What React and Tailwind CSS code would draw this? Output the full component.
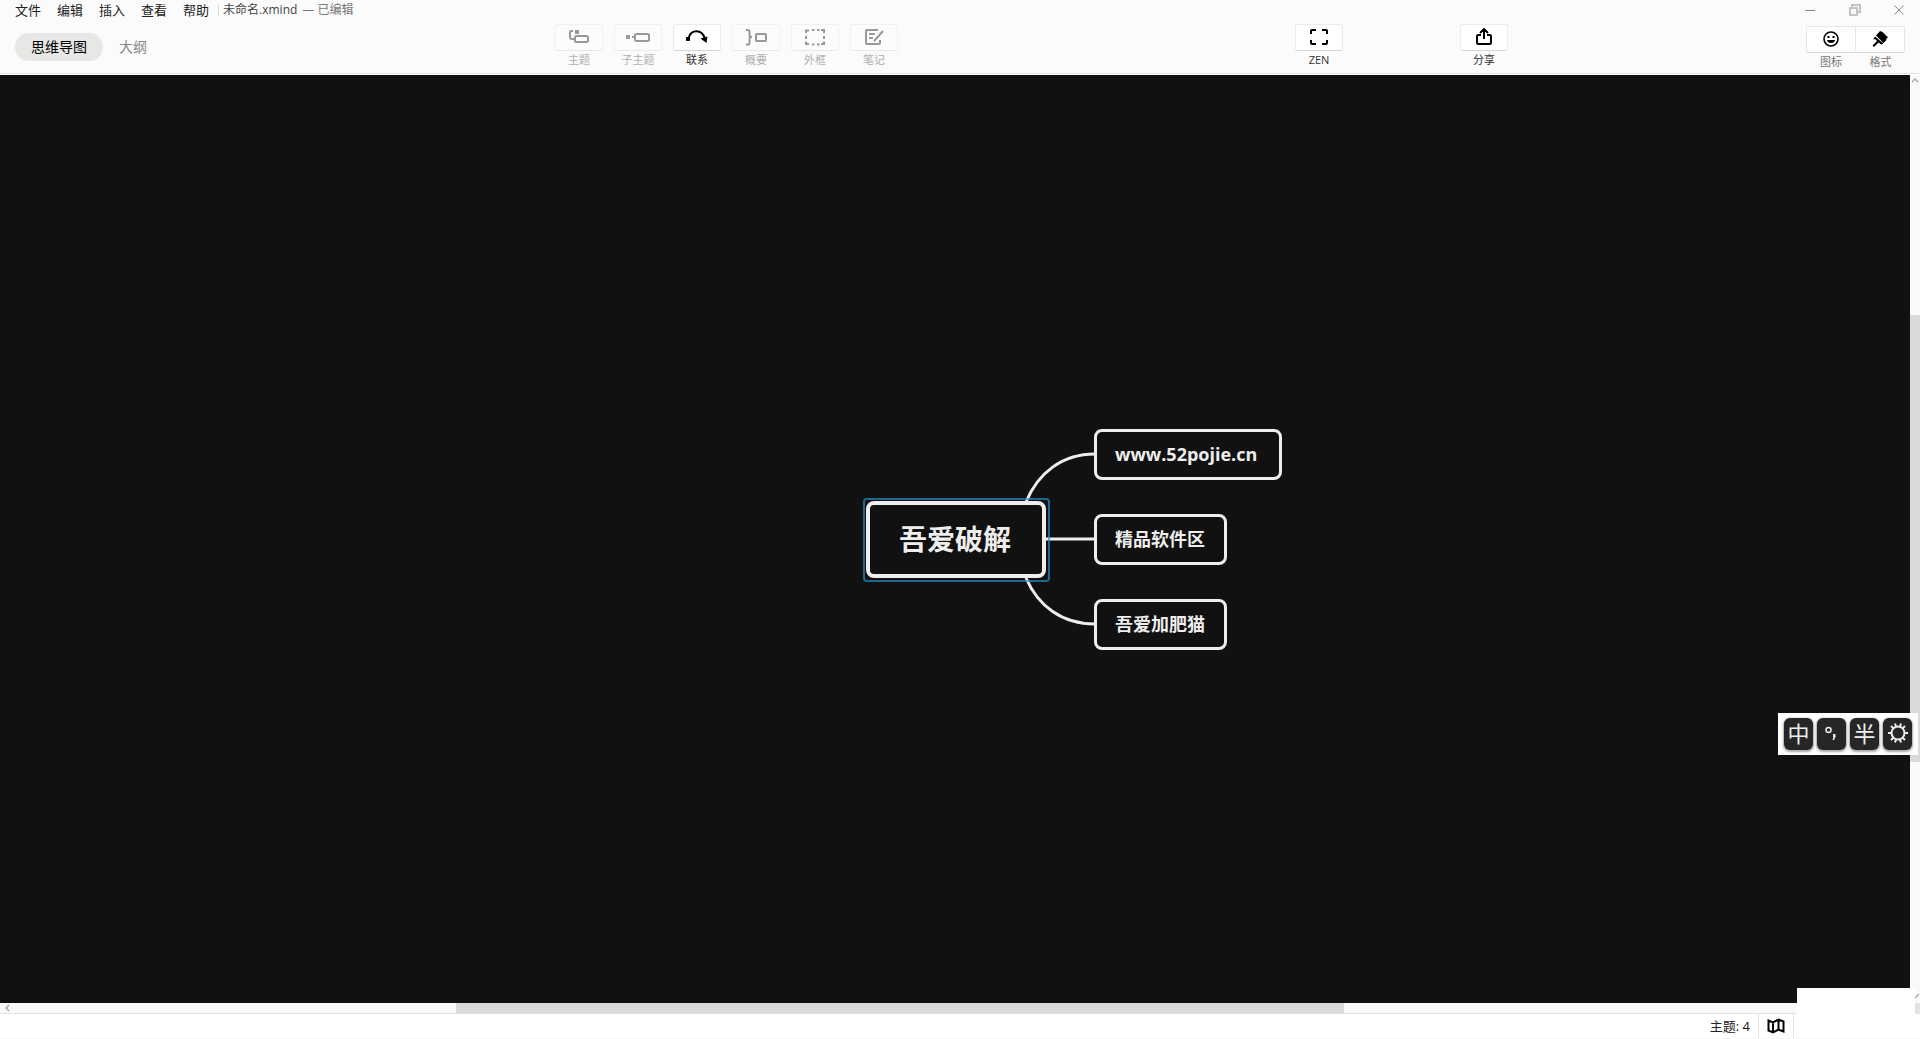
import clsx from "clsx";

const menus = ["文件", "编辑", "插入", "查看", "帮助"];

const icons = {
  topic: (
    <svg width="22" height="18" viewBox="0 0 22 18" fill="none" stroke="currentColor" strokeWidth="2">
      <path d="M5 3H3a1 1 0 0 0-1 1v5a2 2 0 0 0 2 2h3" />
      <rect x="7" y="8" width="13" height="6" rx="1.5" />
      <path d="M7 2h4v4H7z" fill="currentColor" stroke="none" />
    </svg>
  ),
  subtopic: (
    <svg width="24" height="18" viewBox="0 0 24 18" fill="none" stroke="currentColor" strokeWidth="2">
      <path d="M0 7h4v4H0z" fill="currentColor" stroke="none" />
      <path d="M6 9h3" />
      <rect x="9" y="6" width="14" height="7" rx="1.5" />
    </svg>
  ),
  relation: (
    <svg width="22" height="18" viewBox="0 0 22 18" fill="none" stroke="currentColor" strokeWidth="2">
      <path d="M3 9C5 1.500 16 .5 18.500 10" />
      <path d="M0 9h4v4H0zM14.500 10.500l7-2-1 6.500z" fill="currentColor" stroke="none" />
    </svg>
  ),
  summary: (
    <svg width="22" height="18" viewBox="0 0 22 18" fill="none" stroke="currentColor" strokeWidth="2">
      <path d="M1 2h2q1.500 0 1.500 1.500V7q0 2 2.500 2-2.500 0-2.500 2v4q0 1.500-1.500 1.500H1" />
      <rect x="11" y="6" width="10" height="7" rx="1" />
    </svg>
  ),
  boundary: (
    <svg width="20" height="18" viewBox="0 0 20 18" fill="none" stroke="currentColor" strokeWidth="2">
      <path d="M1 5V2.500h3M7 2h2.500M12 2h2.500M16 2h3v3M1 8v3M19 8v3M1 13.500V16h3M7 16.500h2.500M12 16.500h2.500M16 16h3v-2.500" />
    </svg>
  ),
  note: (
    <svg width="20" height="18" viewBox="0 0 20 18" fill="none" stroke="currentColor" strokeWidth="2">
      <path d="M14 2H3a1 1 0 0 0-1 1v12a1 1 0 0 0 1 1h12a1 1 0 0 0 1-1v-3M5 6h6M5 10h4M19 3l-8 9-1 1" />
    </svg>
  ),
  zen: (
    <svg width="18" height="18" viewBox="0 0 18 18" fill="none" stroke="currentColor" strokeWidth="2">
      <path d="M1 6V3a1 1 0 0 1 1-1h4M12 2h4a1 1 0 0 1 1 1v3M17 12v3a1 1 0 0 1-1 1h-4M6 16H2a1 1 0 0 1-1-1v-3" />
    </svg>
  ),
  share: (
    <svg width="18" height="18" viewBox="0 0 18 18" fill="none" stroke="currentColor" strokeWidth="2">
      <path d="M6 7H3a1 1 0 0 0-1 1v7a1 1 0 0 0 1 1h12a1 1 0 0 0 1-1V8a1 1 0 0 0-1-1h-3M9 11V2M5 5l4-4 4 4" />
    </svg>
  ),
  sticker: (
    <svg width="16" height="16" viewBox="0 0 16 16" fill="none" stroke="currentColor" strokeWidth="1.6">
      <circle cx="8" cy="8" r="7" />
      <path d="M4.500 5h2v2h-2zM9.500 5h2v2h-2zM4 9h8c-.3 4-7.700 4-8 0z" fill="currentColor" stroke="none" />
    </svg>
  ),
  format: (
    <svg width="16" height="16" viewBox="0 0 16 16" fill="currentColor">
      <path d="M8 0l2.500 1L16 6.500 14 8l.5 1-3 3L4 4.500z" />
      <path d="M3 5.500l8.500 7-2 1-3-2L2 16l-1.500-1.500L5 10 3 8 1 8.500z" />
    </svg>
  ),
};

const tools = [
  { icon: "topic", label: "主题" },
  { icon: "subtopic", label: "子主题" },
  { icon: "relation", label: "联系", active: true },
  { icon: "summary", label: "概要" },
  { icon: "boundary", label: "外框" },
  { icon: "note", label: "笔记" },
];

function ToolButton({ icon, label, active = true }) {
  return (
    <button disabled={!active} className="flex w-12 flex-col items-center">
      <span
        className={clsx(
          "flex h-[27px] w-12 items-center justify-center rounded-xs border pb-px",
          active
            ? "border-[#ececec] border-b-[#d6d6d6] bg-white text-black"
            : "border-[#f1f1f1] border-b-[#e9e9e9] bg-[#fcfcfc] text-[#999]"
        )}
      >
        {icons[icon]}
      </span>
      <span className={clsx("text-[11px] leading-[18px]", active ? "text-[#333]" : "text-[#b0b0b0]")}>{label}</span>
    </button>
  );
}

function Header() {
  return (
    <header className="h-[74px] shrink-0 border-b border-[#e2e2e2] bg-[#fbfbfb]">
      {/* Title bar */}
      <div className="flex h-5 items-center justify-between pl-[15px] pr-4">
        <div className="flex items-center">
          <nav className="flex gap-4">
            {menus.map((menu) => (
              <button key={menu} className="text-[13px] leading-[18px] text-[#222]">
                {menu}
              </button>
            ))}
          </nav>
          <div className="ml-[9px] h-3 w-px bg-[#ddd]" />
          <span className="ml-1 text-xs text-[#444]">未命名.xmind</span>
          <span className="ml-[5px] text-xs text-[#777]">— 已编辑</span>
        </div>
        <div className="flex items-center gap-[33px] text-[#888]">
          <button aria-label="最小化">
            <svg width="11" height="12" viewBox="0 0 11 12" stroke="currentColor">
              <path d="M0 6.500h10" />
            </svg>
          </button>
          <button aria-label="还原" className="text-[#c4c4c4]">
            <svg width="12" height="12" viewBox="0 0 12 12" fill="none" stroke="currentColor" strokeWidth="2">
              <path d="M3 3V1h8v7H9M1 4h7v7H1z" />
            </svg>
          </button>
          <button aria-label="关闭">
            <svg width="10" height="10" viewBox="0 0 10 10" stroke="currentColor">
              <path d="M.5.5l9 9M9.500.5l-9 9" />
            </svg>
          </button>
        </div>
      </div>

      {/* Toolbar */}
      <div className="grid grid-cols-[555fr_740fr_165fr_346fr_114fr] pt-1">
        <div className="flex items-start gap-4 pl-[15px] pt-[9px] text-sm">
          <button className="h-7 rounded-full bg-[#e7e7e6] px-4 text-black">思维导图</button>
          <button className="h-7 text-[#888]">大纲</button>
        </div>
        <div className="flex gap-[11px]">
          {tools.map((tool) => (
            <ToolButton key={tool.icon} icon={tool.icon} label={tool.label} active={!!tool.active} />
          ))}
        </div>
        <div>
          <ToolButton icon="zen" label="ZEN" />
        </div>
        <div>
          <ToolButton icon="share" label="分享" />
        </div>
        <div className="flex pt-[2px] text-[11px] leading-[18px] text-[#777]">
          <button className="flex flex-col items-center">
            <span className="flex h-[27px] w-[50px] items-center justify-center rounded-l-xs border border-[#e6e6e6] border-b-[#d6d6d6] bg-white pb-px text-black">
              {icons.sticker}
            </span>
            图标
          </button>
          <button className="flex flex-col items-center">
            <span className="flex h-[27px] w-[49px] items-center justify-center rounded-r-xs border border-l-0 border-[#e6e6e6] border-b-[#d6d6d6] bg-white pb-px text-black">
              {icons.format}
            </span>
            格式
          </button>
        </div>
      </div>
    </header>
  );
}

const branches = [
  { text: "www.52pojie.cn", place: "left-[466px] top-px w-[188px]" },
  { text: "精品软件区", place: "left-[466px] top-[86px] w-[133px]" },
  { text: "吾爱加肥猫", place: "left-[466px] top-[171px] w-[133px]" },
];

function MindMap() {
  return (
    <main className="flex min-w-0 flex-1 items-center justify-center overflow-hidden bg-[#111]">
      <div className="relative h-[222px] w-[654px] font-bold text-[#eee]">
        <svg className="absolute inset-0" width="654" height="222" fill="none" stroke="#eee" strokeWidth="3">
          <path d="M398 74C410 45 434 26 467 26M416 111h51M398 150c12 28 36 46 69 46" />
        </svg>
        <div className="absolute left-[238px] top-[73px] flex h-[77px] w-[180px] items-center rounded-lg border-4 border-[#eee] bg-[#111] pb-px pl-[29px] text-[28px] leading-none">
          吾爱破解
        </div>
        <div className="absolute left-[235px] top-[70px] h-[84px] w-[187px] rounded-sm border-2 border-[#2a8cc7]/70" />
        {branches.map((branch) => (
          <div
            key={branch.text}
            className={clsx(
              "absolute flex h-[51px] items-center rounded-lg border-3 border-[#eee] bg-[#111] pb-[2px] pl-[18px] text-lg leading-none",
              branch.place
            )}
          >
            {branch.text}
          </div>
        ))}
      </div>
    </main>
  );
}

function InputMethodBar() {
  const key =
    "flex h-8 w-[29px] items-center justify-center rounded-md bg-[#262626] pb-[2px] text-[22px] leading-none text-[#eee] shadow-[0_1px_2px_1px_#aaa]";
  return (
    <div className="absolute right-[2px] top-[713px] flex h-[42px] w-[140px] items-center justify-center gap-1 bg-white">
      <button className={key}>中</button>
      <button aria-label="标点" className={key}>
        <svg width="16" height="20" viewBox="0 0 16 20" fill="none" stroke="currentColor" strokeWidth="1.5">
          <circle cx="4.5" cy="7" r="2.5" />
          <path d="M9 11h2.500v3L10 17H8.500l1-3H9z" fill="currentColor" stroke="none" />
        </svg>
      </button>
      <button className={key}>半</button>
      <button aria-label="设置" className={key}>
        <svg width="22" height="22" viewBox="0 0 22 22" fill="none" stroke="currentColor" strokeWidth="2">
          <circle cx="11" cy="11" r="6.5" />
          <path
            d="M17.500 11H21M4.500 11H1M15.600 15.600L18 18M6.400 15.600L4 18M15.600 6.400L18 4M6.400 6.400L4 4M9 4.500L8 1.500M13 4.500l1-3M9 17.500l-1 3M13 17.500l1 3"
            strokeWidth="2"
          />
        </svg>
      </button>
    </div>
  );
}

export default function App() {
  return (
    <div className="relative flex h-screen flex-col overflow-hidden bg-white font-['Open_Sans','Noto_Sans_CJK_SC',sans-serif]">
      <Header />

      <div className="mt-px flex min-h-0 flex-1">
        <MindMap />
        {/* Vertical scrollbar */}
        <div className="flex w-[10px] flex-col bg-[#fafafa]">
          <svg width="10" height="10" viewBox="0 0 10 10" fill="none" stroke="#aaa" strokeWidth="1.5">
            <path d="M2 7l3-3 3 3" />
          </svg>
          <div className="flex-[230]" />
          <div className="flex-[447] bg-[#dadada]" />
          <div className="flex-[241]" />
        </div>
      </div>

      {/* Horizontal scrollbar */}
      <div className="flex h-[10px] shrink-0 bg-[#fafafa]">
        <svg width="14" height="10" viewBox="0 0 14 10" fill="none" stroke="#aaa" strokeWidth="1.5">
          <path d="M9 2L6 5l3 3" />
        </svg>
        <div className="flex-[442]" />
        <div className="flex-[888] bg-[#dadada]" />
        <div className="flex-[576]" />
      </div>

      <footer className="flex h-[26px] shrink-0 items-stretch justify-end border-y border-t-[#e2e2e2] border-b-[#f7f7f7] bg-white pr-[126px]">
        <span className="pr-2 text-[13px] leading-6 text-[#222]">主题: 4</span>
        <button aria-label="导航图" className="flex w-9 items-center justify-center border-x border-[#e2e2e2] text-black">
          <svg width="18" height="16" viewBox="0 0 18 16" fill="none" stroke="currentColor" strokeWidth="2">
            <path d="M1.500 2.500v10L6 14.500l5.500-3 5 2v-10l-5-2-5.500 3zM6 4.500v10M11.500 1.500v10" />
          </svg>
        </button>
      </footer>

      <div className="absolute bottom-px right-[5px] h-[50px] w-[118px] bg-white" />
      <div className="absolute bottom-[26px] right-0 flex flex-col">
        <svg width="5" height="10" viewBox="0 0 5 10" stroke="#aaa" strokeWidth="1.5">
          <path d="M0 5l4-4" />
        </svg>
        <div className="h-[10px] w-[5px] bg-[#e3e3e3]" />
      </div>
      <InputMethodBar />
    </div>
  );
}
